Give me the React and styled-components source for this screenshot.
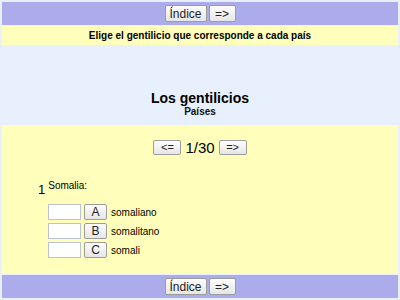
import React from "react";
import styled, { createGlobalStyle } from "styled-components";

const Global = createGlobalStyle`
  html, body { margin: 0; padding: 0; }
  body {
    margin: 2px;
    background: #e8f0fe;
    font-family: "Liberation Sans", Arial, sans-serif;
    color: #000;
  }
`;

const Page = styled.div`
  display: flex;
  flex-direction: column;
  width: 396px;
`;

const Bar = styled.div`
  background: #acacea;
  height: 23px;
  display: flex;
  align-items: center;
  justify-content: center;
  gap: 2px;
  margin-top: ${(p) => (p.$bottom ? "1px" : "0")};
  margin-bottom: ${(p) => (p.$bottom ? "0" : "1px")};
`;

const Btn = styled.button`
  font-family: "Liberation Sans", Arial, sans-serif;
  font-size: ${(p) => p.$size || 12}px;
  height: ${(p) => p.$h || 17}px;
  width: ${(p) => p.$w}px;
  padding: 0;
  border: 1px solid #9c9c9c;
  border-radius: 2px;
  background: linear-gradient(#fdfdfd, #e6e6e6);
  color: #222;
  line-height: 1;
  display: inline-flex;
  align-items: center;
  justify-content: center;
`;

const Instruction = styled.div`
  background: #ffffbb;
  height: 19px;
  display: flex;
  align-items: center;
  justify-content: center;
  font-size: 10px;
  font-weight: bold;
`;

const Header = styled.div`
  height: 80px;
  display: flex;
  flex-direction: column;
  align-items: center;
  justify-content: flex-end;
  padding-bottom: 7px;
  box-sizing: border-box;
`;

const Title = styled.div`
  font-size: 14px;
  font-weight: bold;
  line-height: 16px;
`;

const Subtitle = styled.div`
  font-size: 10px;
  font-weight: bold;
  line-height: 12px;
  color: #111;
`;

const Main = styled.div`
  background: #ffffbb;
  height: 149px;
  padding-top: 14px;
  box-sizing: border-box;
`;

const Nav = styled.div`
  display: flex;
  justify-content: center;
  align-items: center;
  gap: 4px;
`;

const Count = styled.span`
  font-size: 15px;
  line-height: 17px;
`;

const Question = styled.div`
  margin-top: 24px;
  margin-left: 36px;
  display: flex;
  align-items: flex-start;
  gap: 3px;
`;

const Num = styled.span`
  font-size: 13px;
  line-height: 15px;
  padding-top: 2px;
`;

const Label = styled.span`
  font-size: 10px;
  line-height: 12px;
`;

const Options = styled.div`
  margin-top: 7px;
  margin-left: 46px;
  display: flex;
  flex-direction: column;
  gap: 3px;
`;

const Row = styled.div`
  display: flex;
  align-items: center;
  gap: 3px;
`;

const Box = styled.input`
  width: 33px;
  height: 16px;
  box-sizing: border-box;
  border: 1px solid #b8c4d4;
  background: #fff;
  padding: 0;
  margin: 0;
`;

const Opt = styled.span`
  font-size: 10px;
  margin-left: 1px;
`;

const options = [
  ["A", "somaliano"],
  ["B", "somalitano"],
  ["C", "somali"],
];

export default function App() {
  return (
    <>
      <Global />
      <Page>
        <Bar>
          <Btn $w={42}>Índice</Btn>
          <Btn $w={27}>=&gt;</Btn>
        </Bar>
        <Instruction>Elige el gentilicio que corresponde a cada país</Instruction>
        <Header>
          <Title>Los gentilicios</Title>
          <Subtitle>Países</Subtitle>
        </Header>
        <Main>
          <Nav>
            <Btn $w={28} $h={15} $size={11}>&lt;=</Btn>
            <Count>1/30</Count>
            <Btn $w={28} $h={15} $size={11}>=&gt;</Btn>
          </Nav>
          <Question>
            <Num>1</Num>
            <Label>Somalia:</Label>
          </Question>
          <Options>
            {options.map(([l, t]) => (
              <Row key={l}>
                <Box readOnly />
                <Btn $w={23} $h={16} $size={12}>{l}</Btn>
                <Opt>{t}</Opt>
              </Row>
            ))}
          </Options>
        </Main>
        <Bar $bottom>
          <Btn $w={42}>Índice</Btn>
          <Btn $w={27}>=&gt;</Btn>
        </Bar>
      </Page>
    </>
  );
}
